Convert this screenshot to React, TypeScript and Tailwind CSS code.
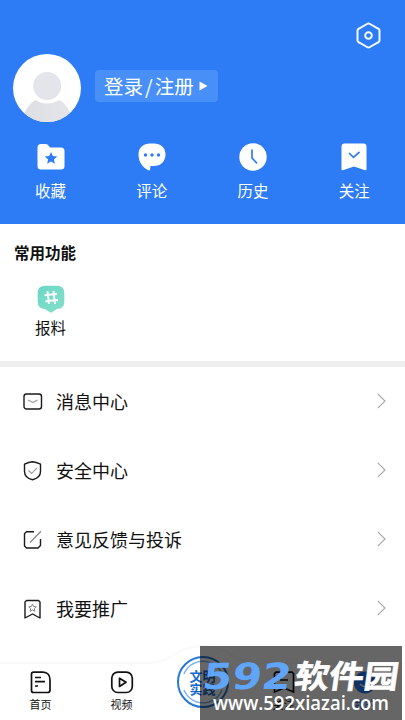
import type { ReactNode } from "react";

type Item = {
  label: string;
  icon: ReactNode;
};

const shortcuts: Item[] = [
  {
    label: "收藏",
    icon: (
      <svg width="28" height="28" viewBox="0 0 28 28">
        <path d="M0.5 4.5Q0.5 1 4 1H9Q10.5 1 11.5 2.5L13 4.5H24Q27.5 4.5 27.5 8V23Q27.5 26.5 24 26.5H4Q0.5 26.5 0.5 23Z" fill="#fff" />
        <path d="M14 9L15.8 13L20.2 13.400L16.900 16.400L17.900 20.800L14 18.500L10.100 20.800L11.100 16.400L7.800 13.400L12.200 13Z" fill="#2e7bf6" />
      </svg>
    ),
  },
  {
    label: "评论",
    icon: (
      <svg width="28" height="28" viewBox="0 0 28 28">
        <path d="M12.500 0.500H15.500C23 0.500 27.500 4.800 27.500 11.500S23 23 15.500 23H12.500L12 26.700Q11.500 27.800 10.500 27.200C4 24 0.500 18.500 0.500 11.500C0.500 4.800 5 0.500 12.500 0.500Z" fill="#fff" />
        <g fill="#2e7bf6">
          <circle cx="7.500" cy="12" r="1.700" />
          <circle cx="14" cy="12" r="1.700" />
          <circle cx="20.500" cy="12" r="1.700" />
        </g>
      </svg>
    ),
  },
  {
    label: "历史",
    icon: (
      <svg width="28" height="28" viewBox="0 0 28 28">
        <circle cx="14" cy="14" r="13.700" fill="#fff" />
        <path d="M13 6.500V15L18 20.300" fill="none" stroke="#2e7bf6" strokeWidth="1.700" />
      </svg>
    ),
  },
  {
    label: "关注",
    icon: (
      <svg width="28" height="28" viewBox="0 0 28 28">
        <path d="M4.500 0.500H23.500Q26.500 0.500 26.500 3.500V26Q26.500 28 24.500 27L14 23.500L3.500 27Q1.500 28 1.500 26V3.500Q1.500 0.500 4.500 0.500Z" fill="#fff" />
        <path d="M9 10L13.500 14.300L19.500 9" fill="none" stroke="#2e7bf6" strokeWidth="1.700" />
      </svg>
    ),
  },
];

const menu: Item[] = [
  {
    label: "消息中心",
    icon: (
      <>
        <rect x="1" y="2" width="17.500" height="15" rx="2.500" />
        <path d="M5 8L9.800 10.500L14.500 8" stroke="#999" strokeWidth="1.100" />
      </>
    ),
  },
  {
    label: "安全中心",
    icon: (
      <>
        <path d="M9.500 0.800Q13 1 17.500 3.200V10.500C17.500 15 13.500 17.800 9.500 18.800C5.500 17.800 1.500 15 1.500 10.500V3.200Q6 1 9.500 0.800Z" />
        <path d="M5.500 9.500L8.700 12.500L14 6.800" stroke="#999" strokeWidth="1.100" />
      </>
    ),
  },
  {
    label: "意见反馈与投诉",
    icon: (
      <>
        <path d="M11 1.800H3.500L1.500 3.800V16L3.500 18H15L17.500 15.500V9" />
        <path d="M7 12.500L18 1.300" stroke="#888" strokeWidth="1.300" />
      </>
    ),
  },
  {
    label: "我要推广",
    icon: (
      <>
        <path d="M3.500 1.500H15.500L17 3V19L9.500 15L2 19V3Z" />
        <path d="M9.500 5L10.600 7.500L13.300 7.800L11.300 9.600L11.900 12.300L9.500 10.900L7.100 12.300L7.700 9.600L5.700 7.800L8.400 7.500Z" stroke="#888" strokeWidth="1" />
      </>
    ),
  },
];

function Header() {
  return (
    <header className="h-[224px] bg-[#2e7bf6] text-white">
      <div className="flex h-[54px] items-center justify-end pt-4 pr-6">
        <svg width="25" height="27" viewBox="0 0 25 27" fill="none" stroke="#f2fbff" strokeWidth="2">
          <path d="M12.500 1.500Q13.300 1.500 14 2L22 6.500Q23.500 7.300 23.500 8.500V18.500Q23.500 19.700 22 20.500L14 25Q12.500 26 11 25L3 20.500Q1.500 19.700 1.500 18.500V8.500Q1.500 7.300 3 6.500L11 2Q11.700 1.500 12.500 1.500Z" />
          <circle cx="12.500" cy="13.500" r="3.300" />
        </svg>
      </div>
      <div className="flex h-[68px] pl-[13px]">
        <svg width="68" height="68" viewBox="0 0 68 68">
          <defs>
            <clipPath id="avatar"><circle cx="34" cy="34" r="34" /></clipPath>
            <linearGradient id="shoulder" x1="0" x2="1">
              <stop stopColor="#dddfe3" />
              <stop offset="1" stopColor="#e3e5ea" />
            </linearGradient>
          </defs>
          <g clipPath="url(#avatar)">
            <rect width="68" height="68" fill="#fff" />
            <path d="M11 60Q15 51 22 46Q34 53 47 46Q54 51 58 60V69H11Z" fill="url(#shoulder)" />
            <circle cx="34.200" cy="32" r="14" fill="#e3e5ea" />
          </g>
        </svg>
        <div className="mt-4 ml-[14px] flex h-8 w-[123px] items-center rounded bg-[#4890f8] pl-[9px] text-[19.500px] leading-8">
          <span>登录</span>
          <span className="px-[2px]">/</span>
          <span>注册</span>
          <svg className="ml-[5px]" width="9" height="10" viewBox="0 0 9 10"><path d="M0.500 0.500L8.500 5L0.500 9.500Z" fill="#fff" /></svg>
        </div>
      </div>
      <div className="grid grid-cols-4 pt-[21px]">
        {shortcuts.map((item) => (
          <div key={item.label} className="flex flex-col items-center">
            {item.icon}
            <span className="mt-[7px] text-[15.500px] leading-6">{item.label}</span>
          </div>
        ))}
      </div>
    </header>
  );
}

function CommonTools() {
  return (
    <section className="h-[137px] pt-4">
      <h2 className="pl-[14px] text-[15.500px] leading-6 font-bold">常用功能</h2>
      <div className="mt-[21px] flex w-[101px] flex-col items-center">
        <svg width="28" height="28" viewBox="0 0 28 28">
          <defs>
            <linearGradient id="mint" x2="1" y2="1">
              <stop stopColor="#6bd8c6" />
              <stop offset="1" stopColor="#85dfc8" />
            </linearGradient>
          </defs>
          <path d="M8 0.700H20Q27.300 0.700 27.300 8V17Q27.300 23.500 20 24L15.500 27Q14 28.200 12.500 27L8 24Q0.700 23.500 0.700 17V8Q0.700 0.700 8 0.700Z" fill="url(#mint)" />
          <path d="M10.500 6L12 19M16.500 6L18 19M7.500 10.300L20 9M8.500 16.300L21 15" stroke="#fff" strokeWidth="1.900" />
        </svg>
        <span className="mt-[2px] text-[15.500px] leading-6">报料</span>
      </div>
    </section>
  );
}

function TabBar() {
  return (
    <nav className="relative h-[64px] shrink-0">
      {/* raised edge around the middle button */}
      <svg className="absolute -top-4 left-0" width="405" height="80" viewBox="0 0 405 80">
        <path d="M-4 23H148C173 23 176 6 203 6S233 23 258 23H409V84H-4Z" fill="#fff" stroke="#f9f9f9" strokeWidth="2" />
      </svg>
      <div className="relative grid h-full grid-cols-5 text-[11px] leading-4">
        <div className="flex flex-col items-center pt-[15px]">
          <svg width="22" height="23" viewBox="0 0 22 23" fill="none" stroke="#111" strokeWidth="1.700">
            <path d="M3.500 1.200H13C17.500 1.200 20 4.500 20 9V19Q20 21.500 17.500 21.500H3.500Q1.500 21.500 1.500 19.500V3.200Q1.500 1.200 3.500 1.200Z" />
            <path d="M5 6.500H11M5 10.700H15M5 15H8" />
          </svg>
          <span className="mt-[2px]">首页</span>
        </div>
        <div className="flex flex-col items-center pt-[15px]">
          <svg width="24" height="23" viewBox="0 0 24 23" fill="none" stroke="#111" strokeWidth="1.700">
            <rect x="1.800" y="1.200" width="20.500" height="20.300" rx="6" />
            <path d="M9.500 7.200V15.500L16 11.300Z" strokeLinejoin="round" />
          </svg>
          <span className="mt-[2px]">视频</span>
        </div>
        <div className="flex justify-center">
          <div className="relative flex h-[52px] w-[52px] shrink-0 items-center justify-center rounded-full border-2 border-[#2878d8]">
            <svg className="absolute inset-0" width="48" height="48" viewBox="0 0 48 48" fill="none" stroke="#7db6ee" strokeWidth="1.500">
              <path d="M5 16A20.500 20.500 0 0 1 43 16M5 32A20.500 20.500 0 0 0 43 32" />
            </svg>
            <span className="relative text-center text-[13px] leading-[13px] font-bold text-[#1269cf]">文明<br />实践</span>
          </div>
        </div>
        <div className="flex flex-col items-center pt-[15px]">
          <svg width="22" height="23" viewBox="0 0 22 23" fill="none" stroke="#111" strokeWidth="1.700">
            <path d="M3 1.200H19L20.500 2.700V21L11 17L1.500 21V2.700ZM7 9H15" />
          </svg>
          <span className="mt-[2px]">关注</span>
        </div>
        <div className="flex flex-col items-center pt-[15px] text-[#2e7bf6]">
          <svg width="24" height="23" viewBox="0 0 24 23">
            <circle cx="12" cy="11.500" r="11" fill="#2e7bf6" />
            <path d="M7 13Q12 18 17 13" fill="none" stroke="#fff" strokeWidth="1.500" />
          </svg>
          <span className="mt-[2px]">我的</span>
        </div>
      </div>
    </nav>
  );
}

function Watermark() {
  return (
    <div className="absolute right-[3px] bottom-0 h-[74px] w-[202px] bg-black/60">
      <svg width="202" height="74" viewBox="0 0 202 74">
        <g transform="translate(0 43) skewX(-8)">
          <text x="1" y="0" textLength="89" lengthAdjust="spacingAndGlyphs" className="fill-[#60a5fa] font-['DejaVu_Sans'] text-[36px] font-bold">592</text>
          <text x="93" y="-1" textLength="104" lengthAdjust="spacingAndGlyphs" className="fill-white font-['Noto_Sans_CJK_SC'] text-[32px] font-bold" stroke="#fff" strokeWidth="0.600">软件园</text>
        </g>
        <text x="13" y="64" textLength="176" lengthAdjust="spacingAndGlyphs" className="fill-white font-['Open_Sans'] text-[20px] font-semibold">www.592xiazai.com</text>
      </svg>
    </div>
  );
}

export default function App() {
  return (
    <div className="relative flex h-[720px] w-[405px] flex-col overflow-hidden bg-white font-['Noto_Sans_CJK_SC',sans-serif] text-[#111]">
      <Header />
      <CommonTools />
      <div className="h-[6px] shrink-0 bg-[#eeeeee]" />
      <ul className="h-[289px] shrink-0">
        {menu.map((item) => (
          <li key={item.label} className="flex h-[69px] items-center pr-[19px] pl-[23px]">
            <svg width="20" height="20" viewBox="0 0 20 20" fill="none" stroke="#1a1a1a" strokeWidth="1.400" strokeLinejoin="round">
              {item.icon}
            </svg>
            <span className="mb-[2px] ml-[13px] flex-1 text-[18px] leading-7">{item.label}</span>
            <svg className="mb-px" width="9" height="16" viewBox="0 0 9 16" fill="none" stroke="#aaa" strokeWidth="1.200">
              <path d="M0.800 0.800L8 8L0.800 15.200" />
            </svg>
          </li>
        ))}
      </ul>
      <TabBar />
      <Watermark />
    </div>
  );
}
